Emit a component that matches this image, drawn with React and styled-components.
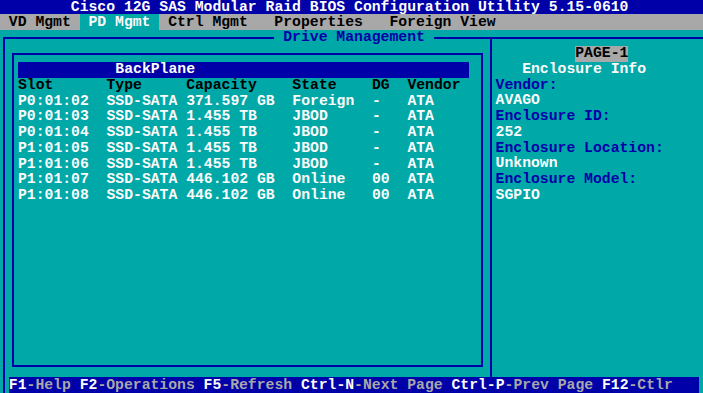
import React from "react";
import styled, { createGlobalStyle } from "styled-components";

const TEAL = "#00a8a8";
const BLUE = "#0000a8";
const GRAY = "#a8a8a8";
const WHITE = "#fcfcfc";
const BLACK = "#000000";
const ROW = "15.75px";

const GlobalStyle = createGlobalStyle`
  html, body { margin: 0; padding: 0; background: ${TEAL}; }
  #root { width: 703px; height: 393px; }
`;

const Screen = styled.div`
  width: 703px;
  height: 393px;
  display: flex;
  flex-direction: column;
  background: ${TEAL};
  font-family: "Liberation Mono", "DejaVu Sans Mono", monospace;
  font-weight: bold;
  font-size: 14.75px;
  line-height: ${ROW};
  white-space: pre;
  overflow: hidden;
`;

const TitleBar = styled.div`
  height: 14px;
  line-height: 14px;
  flex: none;
  background: ${BLUE};
  color: ${WHITE};
  padding-left: 8ch;
  overflow: hidden;
`;

const TabBar = styled.div`
  height: 16px;
  line-height: 16px;
  flex: none;
  display: flex;
  background: ${GRAY};
  overflow: hidden;
`;

const Tab = styled.div`
  width: ${(p) => p.$w}ch;
  padding-left: 1ch;
  box-sizing: border-box;
  background: ${(p) => (p.$active ? TEAL : "transparent")};
  color: ${(p) => (p.$active ? WHITE : BLACK)};
  flex: none;
`;

const Workspace = styled.div`
  position: relative;
  flex: 1;
  display: flex;
  flex-direction: column;
  margin-top: 7px;
  margin-left: 3px;
  border-top: 2px solid ${BLUE};
  border-left: 2px solid ${BLUE};
  min-height: 0;
`;

const Legend = styled.div`
  position: absolute;
  top: -9px;
  left: 269.4px;
  height: ${ROW};
  padding: 0 1ch;
  background: ${TEAL};
  color: ${BLUE};
`;

const Content = styled.div`
  flex: 1;
  display: flex;
  min-height: 0;
`;

const LeftPane = styled.div`
  width: 485px;
  flex: none;
  box-sizing: border-box;
  padding: 14px 7px 10px 7px;
  display: flex;
`;

const ListBox = styled.div`
  flex: 1;
  border: 2px solid ${BLUE};
  padding: 7px 12px 0 4px;
  display: flex;
  flex-direction: column;
`;

const BarTitle = styled.div`
  height: ${ROW};
  background: ${BLUE};
  color: ${WHITE};
  padding-left: 11ch;
`;

const Row = styled.div`
  display: grid;
  grid-template-columns: 10ch 9ch 12ch 9ch 4ch 1fr;
  height: ${ROW};
  color: ${(p) => (p.$head ? BLACK : WHITE)};
`;

const RightPane = styled.div`
  flex: 1;
  border-left: 2px solid ${BLUE};
  padding: 7px 0 0 3.6px;
  display: flex;
  flex-direction: column;
  align-items: flex-start;
`;

const Line = styled.div`
  height: ${ROW};
  margin-left: ${(p) => p.$indent || 0}ch;
  color: ${(p) => p.$color};
`;

const PageTag = styled.div`
  height: ${ROW};
  margin-left: 9ch;
  background: ${GRAY};
  color: ${BLACK};
`;

const Footer = styled.div`
  height: 16px;
  line-height: 16px;
  flex: none;
  margin: 0 4px 0 3.85px;
  background: ${BLUE};
  color: ${GRAY};
  overflow: hidden;
`;

const Key = styled.span`
  color: ${WHITE};
`;

const tabs = [
  { label: "VD Mgmt", w: 9 },
  { label: "PD Mgmt", w: 9, active: true },
  { label: "Ctrl Mgmt", w: 12 },
  { label: "Properties", w: 13 },
  { label: "Foreign View", w: 20 },
];

const header = ["Slot", "Type", "Capacity", "State", "DG", "Vendor"];

const drives = [
  ["P0:01:02", "SSD-SATA", "371.597 GB", "Foreign", "-", "ATA"],
  ["P0:01:03", "SSD-SATA", "1.455 TB", "JBOD", "-", "ATA"],
  ["P0:01:04", "SSD-SATA", "1.455 TB", "JBOD", "-", "ATA"],
  ["P1:01:05", "SSD-SATA", "1.455 TB", "JBOD", "-", "ATA"],
  ["P1:01:06", "SSD-SATA", "1.455 TB", "JBOD", "-", "ATA"],
  ["P1:01:07", "SSD-SATA", "446.102 GB", "Online", "00", "ATA"],
  ["P1:01:08", "SSD-SATA", "446.102 GB", "Online", "00", "ATA"],
];

const info = [
  { label: "Vendor:", value: "AVAGO" },
  { label: "Enclosure ID:", value: "252" },
  { label: "Enclosure Location:", value: "Unknown" },
  { label: "Enclosure Model:", value: "SGPIO" },
];

const keys = [
  ["F1", "-Help"],
  ["F2", "-Operations"],
  ["F5", "-Refresh"],
  ["Ctrl-N", "-Next Page"],
  ["Ctrl-P", "-Prev Page"],
  ["F12", "-Ctlr"],
];

export default function App() {
  return (
    <>
      <GlobalStyle />
      <Screen>
        <TitleBar>Cisco 12G SAS Modular Raid BIOS Configuration Utility 5.15-0610</TitleBar>
        <TabBar>
          {tabs.map((t) => (
            <Tab key={t.label} $w={t.w} $active={t.active}>
              {t.label}
            </Tab>
          ))}
        </TabBar>
        <Workspace>
          <Legend>Drive Management</Legend>
          <Content>
            <LeftPane>
              <ListBox>
                <BarTitle>BackPlane</BarTitle>
                <Row $head>
                  {header.map((h) => (
                    <span key={h}>{h}</span>
                  ))}
                </Row>
                {drives.map((d) => (
                  <Row key={d[0]}>
                    {d.map((c, i) => (
                      <span key={i}>{c}</span>
                    ))}
                  </Row>
                ))}
              </ListBox>
            </LeftPane>
            <RightPane>
              <PageTag>PAGE-1</PageTag>
              <Line $indent={3} $color={WHITE}>Enclosure Info</Line>
              {info.map((it) => (
                <React.Fragment key={it.label}>
                  <Line $color={BLUE}>{it.label}</Line>
                  <Line $color={WHITE}>{it.value}</Line>
                </React.Fragment>
              ))}
            </RightPane>
          </Content>
          <Footer>
            {keys.map(([k, d], i) => (
              <React.Fragment key={k}>
                {i > 0 ? " " : ""}
                <Key>{k}</Key>
                {d}
              </React.Fragment>
            ))}
          </Footer>
        </Workspace>
      </Screen>
    </>
  );
}
